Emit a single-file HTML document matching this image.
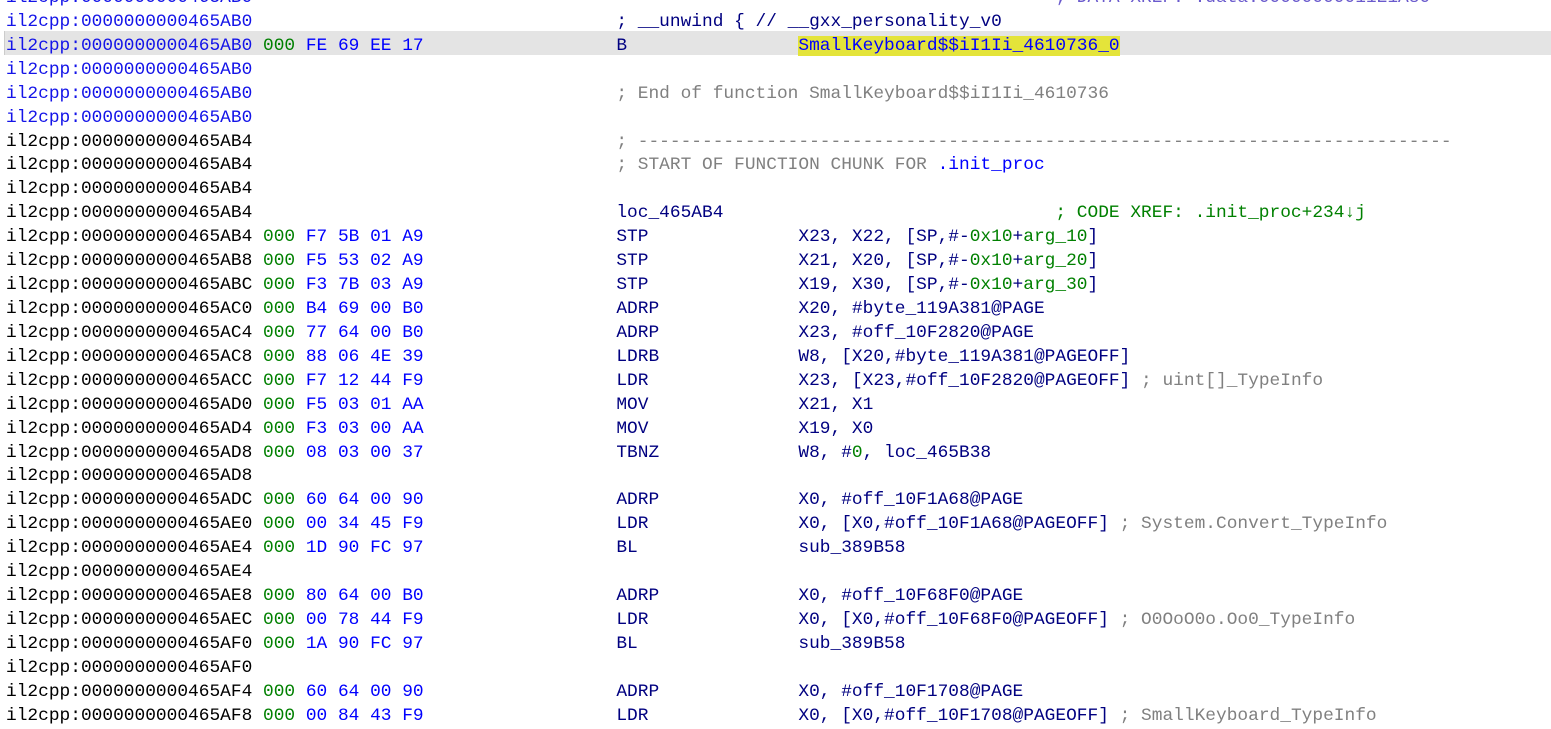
<!DOCTYPE html>
<html><head><meta charset="utf-8"><style>
html,body{margin:0;padding:0;background:#fff;width:1551px;height:726px;overflow:hidden}
.w{position:absolute;left:6px;top:-13px;margin:0;font-family:"Liberation Mono",monospace;font-size:17.85px;line-height:23.93px;color:#000;white-space:normal}
.r{height:23.93px;white-space:pre}
.A{display:inline-block;width:24ch}
.B{display:inline-block;width:33ch}
.M{display:inline-block;width:17ch}
.L{display:inline-block;width:41ch}
.X{display:inline-block;width:74ch}
.hl{position:absolute;left:4px;right:0;top:31px;height:24px;background:#e4e4e4;border-left:1px solid #ccc}
.a{color:#1414e8}.g{color:#008000}.b{color:#0000ff}.n{color:#000080}.c{color:#808080}.y{background:#e4e43a;color:#0000ff}.v{color:#6a5acd}
</style></head><body>
<div class="hl"></div>
<div class="w"><div class="r"><span class="A a">il2cpp:0000000000465AB0</span><span class="X"></span><span class="v">; DATA XREF: .data:00000000011E1A80</span></div><div class="r"><span class="A a">il2cpp:0000000000465AB0</span><span class="B"></span><span class="n">; __unwind { // __gxx_personality_v0</span></div><div class="r"><span class="A a">il2cpp:0000000000465AB0</span><span class="B"><span class="g">000</span> <span class="b">FE 69 EE 17</span></span><span class="M n">B</span><span class="y">SmallKeyboard$$iI1Ii_4610736_0</span></div><div class="r"><span class="A a">il2cpp:0000000000465AB0</span></div><div class="r"><span class="A a">il2cpp:0000000000465AB0</span><span class="B"></span><span class="c">; End of function SmallKeyboard$$iI1Ii_4610736</span></div><div class="r"><span class="A a">il2cpp:0000000000465AB0</span></div><div class="r"><span class="A">il2cpp:0000000000465AB4</span><span class="B"></span><span class="c">; ----------------------------------------------------------------------------</span></div><div class="r"><span class="A">il2cpp:0000000000465AB4</span><span class="B"></span><span class="c">; START OF FUNCTION CHUNK FOR </span><span class="b">.init_proc</span></div><div class="r"><span class="A">il2cpp:0000000000465AB4</span></div><div class="r"><span class="A">il2cpp:0000000000465AB4</span><span class="B"></span><span class="L n">loc_465AB4</span><span class="g">; CODE XREF: .init_proc+234↓j</span></div><div class="r"><span class="A">il2cpp:0000000000465AB4</span><span class="B"><span class="g">000</span> <span class="b">F7 5B 01 A9</span></span><span class="M n">STP</span><span class="n">X23, X22, [SP,#-<span class="g">0x10</span>+<span class="g">arg_10</span>]</span></div><div class="r"><span class="A">il2cpp:0000000000465AB8</span><span class="B"><span class="g">000</span> <span class="b">F5 53 02 A9</span></span><span class="M n">STP</span><span class="n">X21, X20, [SP,#-<span class="g">0x10</span>+<span class="g">arg_20</span>]</span></div><div class="r"><span class="A">il2cpp:0000000000465ABC</span><span class="B"><span class="g">000</span> <span class="b">F3 7B 03 A9</span></span><span class="M n">STP</span><span class="n">X19, X30, [SP,#-<span class="g">0x10</span>+<span class="g">arg_30</span>]</span></div><div class="r"><span class="A">il2cpp:0000000000465AC0</span><span class="B"><span class="g">000</span> <span class="b">B4 69 00 B0</span></span><span class="M n">ADRP</span><span class="n">X20, #byte_119A381@PAGE</span></div><div class="r"><span class="A">il2cpp:0000000000465AC4</span><span class="B"><span class="g">000</span> <span class="b">77 64 00 B0</span></span><span class="M n">ADRP</span><span class="n">X23, #off_10F2820@PAGE</span></div><div class="r"><span class="A">il2cpp:0000000000465AC8</span><span class="B"><span class="g">000</span> <span class="b">88 06 4E 39</span></span><span class="M n">LDRB</span><span class="n">W8, [X20,#byte_119A381@PAGEOFF]</span></div><div class="r"><span class="A">il2cpp:0000000000465ACC</span><span class="B"><span class="g">000</span> <span class="b">F7 12 44 F9</span></span><span class="M n">LDR</span><span class="n">X23, [X23,#off_10F2820@PAGEOFF]</span> <span class="c">; uint[]_TypeInfo</span></div><div class="r"><span class="A">il2cpp:0000000000465AD0</span><span class="B"><span class="g">000</span> <span class="b">F5 03 01 AA</span></span><span class="M n">MOV</span><span class="n">X21, X1</span></div><div class="r"><span class="A">il2cpp:0000000000465AD4</span><span class="B"><span class="g">000</span> <span class="b">F3 03 00 AA</span></span><span class="M n">MOV</span><span class="n">X19, X0</span></div><div class="r"><span class="A">il2cpp:0000000000465AD8</span><span class="B"><span class="g">000</span> <span class="b">08 03 00 37</span></span><span class="M n">TBNZ</span><span class="n">W8, #<span class="g">0</span>, loc_465B38</span></div><div class="r"><span class="A">il2cpp:0000000000465AD8</span></div><div class="r"><span class="A">il2cpp:0000000000465ADC</span><span class="B"><span class="g">000</span> <span class="b">60 64 00 90</span></span><span class="M n">ADRP</span><span class="n">X0, #off_10F1A68@PAGE</span></div><div class="r"><span class="A">il2cpp:0000000000465AE0</span><span class="B"><span class="g">000</span> <span class="b">00 34 45 F9</span></span><span class="M n">LDR</span><span class="n">X0, [X0,#off_10F1A68@PAGEOFF]</span> <span class="c">; System.Convert_TypeInfo</span></div><div class="r"><span class="A">il2cpp:0000000000465AE4</span><span class="B"><span class="g">000</span> <span class="b">1D 90 FC 97</span></span><span class="M n">BL</span><span class="n">sub_389B58</span></div><div class="r"><span class="A">il2cpp:0000000000465AE4</span></div><div class="r"><span class="A">il2cpp:0000000000465AE8</span><span class="B"><span class="g">000</span> <span class="b">80 64 00 B0</span></span><span class="M n">ADRP</span><span class="n">X0, #off_10F68F0@PAGE</span></div><div class="r"><span class="A">il2cpp:0000000000465AEC</span><span class="B"><span class="g">000</span> <span class="b">00 78 44 F9</span></span><span class="M n">LDR</span><span class="n">X0, [X0,#off_10F68F0@PAGEOFF]</span> <span class="c">; O0OoO0o.Oo0_TypeInfo</span></div><div class="r"><span class="A">il2cpp:0000000000465AF0</span><span class="B"><span class="g">000</span> <span class="b">1A 90 FC 97</span></span><span class="M n">BL</span><span class="n">sub_389B58</span></div><div class="r"><span class="A">il2cpp:0000000000465AF0</span></div><div class="r"><span class="A">il2cpp:0000000000465AF4</span><span class="B"><span class="g">000</span> <span class="b">60 64 00 90</span></span><span class="M n">ADRP</span><span class="n">X0, #off_10F1708@PAGE</span></div><div class="r"><span class="A">il2cpp:0000000000465AF8</span><span class="B"><span class="g">000</span> <span class="b">00 84 43 F9</span></span><span class="M n">LDR</span><span class="n">X0, [X0,#off_10F1708@PAGEOFF]</span> <span class="c">; SmallKeyboard_TypeInfo</span></div></div>
</body></html>
